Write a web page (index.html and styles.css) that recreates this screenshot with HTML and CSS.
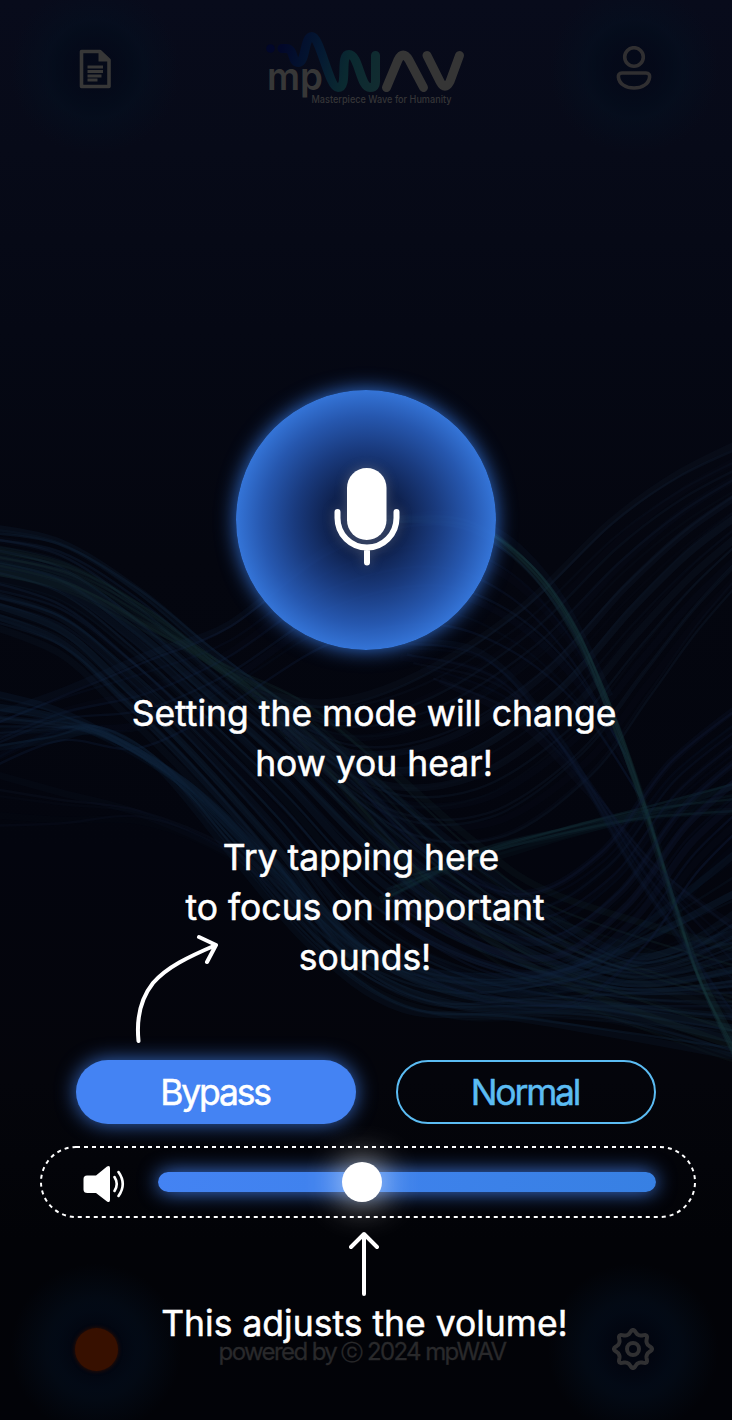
FILE: index.html
```html
<!DOCTYPE html>
<html lang="en">
<head>
<meta charset="utf-8">
<title>mpWAV</title>
<link rel="stylesheet" href="styles.css">
</head>
<body>
<div class="screen">
  <svg class="waves" id="waves" viewBox="0 0 732 1420" fill="none" aria-hidden="true"></svg>

  <header class="header">
    <div class="glow glow-doc">
      <svg class="icon-doc" width="34" height="40" viewBox="0 0 34 40" fill="none" stroke="#373737">
        <path d="M3.5 2.500H22L31 11V37.500H3.5Z" stroke-width="3.6" stroke-linejoin="round"/>
        <path d="M20.500 2V12.500H31.500L29 7.500L25 4Z" fill="#373737" stroke="none"/>
        <path d="M9.500 18H25M9.500 22.500H25M9.500 27H23.500M9.500 31H19.500" stroke-width="3.200"/>
      </svg>
    </div>
    <svg class="logo" width="204" height="78" viewBox="0 0 204 78" fill="none" stroke-linecap="round" stroke-linejoin="round">
      <defs>
        <linearGradient id="wave" gradientUnits="userSpaceOnUse" x1="18" y1="20" x2="120" y2="50">
          <stop offset="0" stop-color="#020729"/>
          <stop offset=".35" stop-color="#041832"/>
          <stop offset=".65" stop-color="#0a2930"/>
          <stop offset="1" stop-color="#122c30"/>
        </linearGradient>
      </defs>
      <circle cx="7.500" cy="20.500" r="4.300" fill="#020729"/>
      <path d="M19 20.500H23C32 20.500 28 34.500 35.500 34.500C43 34.500 41 8.500 49 8.500C57 8.500 66 59.500 75 59.500C86 59.500 76 26.500 86 26.500C96 26.500 97 59.500 107 59.500C113.500 59.500 112.500 54 112.500 48V27.500" stroke="url(#wave)" stroke-width="9"/>
      <path d="M123.500 59.500L135 32Q140 22 146 32L160.500 59.500M164 27.500L177 53.500Q182 63 187 53.500L196.500 27.500" stroke="#353535" stroke-width="9"/>
      <text x="4" y="62" class="logo-mp" textLength="56" lengthAdjust="spacingAndGlyphs">mp</text>
      <text x="48.500" y="74.500" class="logo-tag" textLength="140" lengthAdjust="spacingAndGlyphs">Masterpiece Wave for Humanity</text>
    </svg>
    <div class="glow glow-user">
      <svg width="38" height="46" viewBox="0 0 38 46" fill="none" stroke="#302f31" stroke-width="3.600" stroke-linejoin="round">
        <circle cx="19" cy="11" r="9.300"/>
        <path d="M7 27H31C34 27 34.800 29 34.600 31C34 38 27 42 19 42S4 38 3.400 31C3.200 29 4 27 7 27Z"/>
      </svg>
    </div>
  </header>

  <main class="main">
    <button class="mic" aria-label="Listen">
      <svg width="68" height="100" viewBox="0 0 68 100" fill="none" stroke="#fff" stroke-width="6" stroke-linecap="round">
        <rect x="14" y="1" width="39.500" height="72" rx="19.700" fill="#fff" stroke="none"/>
        <path d="M4.500 45V51A29.500 29.500 0 0 0 63.500 51V45M34 82V95.500"/>
      </svg>
    </button>

    <p class="hint hint-mode">Setting the mode will change<br>how you hear!</p>
    <p class="hint hint-tap"><span class="l1">Try tapping here</span><br><span class="l2">to focus on important</span><br><span class="l3">sounds!</span></p>

    <svg class="arrow-curve" width="90" height="114" viewBox="0 0 90 114" fill="none" stroke="#fff" stroke-width="4" stroke-linecap="round" stroke-linejoin="round">
      <path d="M8.500 110C6 85 12 66 23 52C37 36 58 26 86 14M69 6L86 14L77 31"/>
    </svg>

    <div class="modes">
      <button class="mode mode-on">Bypass</button>
      <button class="mode mode-off">Normal</button>
    </div>

    <div class="volume">
      <svg class="volume-frame" width="656" height="72" fill="none">
        <rect x="1" y="1" width="654" height="70" rx="35" stroke="#fff" stroke-width="2" stroke-dasharray="4 4"/>
      </svg>
      <svg class="speaker" width="44" height="40" viewBox="0 0 44 40" fill="none" stroke="#fff" stroke-width="2.600" stroke-linecap="round">
        <path d="M5 11.500H14L25 2.500Q28 1 28 4V36Q28 39 25 37.500L14 29H5.500Q1.500 29 1.500 25.500V15Q1.500 11.500 5 11.500Z" fill="#fff" stroke="none"/>
        <path d="M32.500 13Q37 20 32.500 27M36.500 8Q45 20 36.500 32"/>
      </svg>
      <div class="track"><div class="knob"></div></div>
    </div>

    <div class="hint hint-volume">
      <svg width="32" height="66" viewBox="0 0 32 66" fill="none" stroke="#fff" stroke-width="4" stroke-linecap="round" stroke-linejoin="round">
        <path d="M15 64V4M2 17L15 4L28 17"/>
      </svg>
      <span>This adjusts the volume!</span>
    </div>
  </main>

  <footer class="footer">
    <div class="glow glow-rec"><span class="rec"></span></div>
    <p class="credit">powered by <span class="c">ⓒ</span> 2024 mpWAV</p>
    <div class="glow glow-gear">
      <svg width="46" height="46" viewBox="-23 -23 46 46" fill="none" stroke="#303032" stroke-width="4" stroke-linejoin="round">
        <path id="gear"/>
        <circle r="6"/>
      </svg>
    </div>
  </footer>
</div>
<script src="waves.js"></script>
</body>
</html>
```
FILE: styles.css
```css
* { box-sizing: border-box; }

body {
  margin: 0;
  background: #020308;
  font-family: Inter, "Liberation Sans", sans-serif;
  color: #fff;
}

.screen {
  position: relative;
  width: 732px;
  height: 1420px;
  overflow: hidden;
  display: flex;
  flex-direction: column;
  background: linear-gradient(#080b1b 0, #070a18 150px, #050814 330px, #04060f 560px, #03050e 850px, #04050b 1080px, #020307 1240px, #020308 100%);
}

.waves { position: absolute; inset: 0; width: 732px; height: 1420px; filter: blur(.7px); opacity: .75; }

.header, .footer {
  position: relative;
  display: flex;
  justify-content: space-between;
  flex: none;
}
.header { height: 156px; padding-top: 28px; }

.glow {
  width: 190px;
  height: 190px;
  flex: none;
  display: flex;
  align-items: center;
  justify-content: center;
  background: radial-gradient(closest-side, rgba(2, 8, 24, .5) 20%, rgba(3, 13, 28, .65) 42%, rgba(4, 16, 32, .5) 52%, rgba(4, 14, 30, 0) 90%);
}
.header .glow { margin-top: -54px; }
.glow-doc { margin-left: 0; }
.glow-user { margin-right: 3px; }

.logo { flex: none; }
.logo-mp { font-size: 38px; font-weight: 600; fill: #373737; }
.logo-tag { font-size: 10px; font-weight: 500; fill: #353537; }

.main {
  position: relative;
  flex: none;
  height: 1098px;
  display: flex;
  flex-direction: column;
}

button { font: inherit; border: 0; padding: 0; }

.mic {
  width: 260px;
  height: 260px;
  margin: 234px 0 0 236px;
  flex: none;
  border-radius: 50%;
  display: flex;
  align-items: center;
  justify-content: center;
  background: radial-gradient(closest-side, rgba(14, 32, 78, .72) 0, rgba(18, 42, 98, .78) 30%, rgba(29, 67, 144, .86) 55%, rgba(41, 94, 188, .92) 80%, rgba(54, 120, 222, .97) 100%);
  box-shadow: 0 0 20px rgba(59, 130, 246, .85);
}
.mic svg { filter: drop-shadow(0 0 6px rgba(180, 180, 180, .35)); margin: -7px 0 0 1px; }

.hint {
  margin: 0;
  font-size: 35.5px;
  line-height: 50px;
  font-weight: 400;
  -webkit-text-stroke: .5px currentColor;
  text-align: center;
  white-space: nowrap;
}
.hint-mode { margin: 39px 0 0 16px; }
.hint-tap { margin: 44px 10px 0 0; }
.hint-tap .l2, .hint-tap .l3 { margin-left: 8px; }

.arrow-curve { position: absolute; left: 130px; top: 775px; }

.modes {
  display: flex;
  gap: 40px;
  margin: 77px 0 0 76px;
}
.mode {
  height: 64px;
  border-radius: 32px;
  font-size: 35.5px;
  font-weight: 400;
  letter-spacing: -2.2px;
  -webkit-text-stroke: .5px currentColor;
  text-align: center;
}
.mode-on { width: 280px; padding-right: 2px; background: #4483f3; color: #fff; box-shadow: 0 0 20px rgba(68, 131, 243, .8); }
.mode-off { width: 260px; padding-right: 2px; background: transparent; border: 2px solid #5bbcf3; color: #5bbcf3; }

.volume {
  position: relative;
  display: flex;
  align-items: center;
  width: 656px;
  height: 72px;
  margin: 22px 0 0 40px;
  padding: 0 40px 0 42px;
}
.volume-frame { position: absolute; left: 0; top: 0; }
.speaker { flex: none; margin-top: 4px; }
.track {
  width: 498px;
  height: 20px;
  margin-left: 32px;
  border-radius: 10px;
  background: linear-gradient(100deg, #4483f3, #3780e3);
  box-shadow: 0 0 20px rgba(68, 131, 243, .95);
}
.knob {
  width: 40px;
  height: 40px;
  margin: -10px 0 0 184px;
  border-radius: 50%;
  background: #fff;
  box-shadow: 0 0 36px rgba(255, 255, 255, .85);
}

.hint-volume {
  position: absolute;
  z-index: 2;
  left: 0;
  right: 3px;
  top: 1074px;
  display: flex;
  flex-direction: column;
  align-items: center;
}
.hint-volume span { margin-top: 3px; }

.footer { height: 166px; }
.glow-rec { margin-left: 1px; }
.glow-gear { margin-right: 4px; }
.rec { width: 43px; height: 43px; border-radius: 50%; background: #371000; box-shadow: 0 0 4px #371000; }
.credit {
  margin: 82px 5px 0 0;
  font-size: 24px;
  line-height: 32px;
  font-weight: 400;
  letter-spacing: -1.6px;
  -webkit-text-stroke: .3px currentColor;
  color: #29292b;
  white-space: nowrap;
}
.credit .c { font-size: 22px; }
```
FILE: waves.js
```js
// Each family is a sheet of strands blended between two guide curves.
const families = [
  { a: [[-20,526],[60,540],[140,588],[215,650],[300,715],[400,800],[500,880],[640,960],[760,900]],
    b: [[-20,620],[60,650],[120,705],[185,770],[270,870],[350,975],[450,1018],[600,1020],[760,1066]], n: 34, c: '#16304c', o: .3 },
  { a: [[-20,545],[70,565],[150,610],[220,665],[300,700],[380,760],[470,840],[560,900],[760,960]],
    b: [[-20,570],[70,590],[140,625],[215,665],[290,740],[370,840],[450,930],[560,1000],[760,1075]], n: 12, c: '#1f403f', o: .22 },
  { a: [[-20,720],[60,690],[150,650],[230,620],[330,545],[430,514],[500,535],[560,600],[610,700]],
    b: [[-20,775],[60,740],[140,745],[230,700],[330,640],[430,622],[510,650],[580,710],[640,800]], n: 9, c: '#1b3360', o: .2 },
  { a: [[-20,750],[50,738],[100,728],[160,765],[230,850],[310,945],[400,1010],[520,1022],[760,1065]],
    b: [[-20,690],[50,710],[110,740],[190,790],[270,860],[370,950],[480,975],[600,950],[760,830]], n: 16, c: '#15304c', o: .28 },
  { a: [[250,690],[330,700],[420,670],[520,605],[610,520],[680,472],[760,435]],
    b: [[290,740],[400,830],[500,840],[590,780],[650,700],[700,630],[760,560]], n: 24, c: '#182b42', o: .25 },
  { a: [[380,518],[470,525],[530,565],[575,630],[615,720],[645,810],[675,910],[705,990],[760,1090]],
    b: [[380,524],[465,522],[532,570],[578,635],[612,720],[648,815],[678,910],[702,985],[760,1110]], n: 6, c: '#1d4448', o: .34 },
  { a: [[380,900],[480,850],[560,830],[650,808],[760,775]],
    b: [[400,880],[490,855],[570,832],[650,816],[760,812]], n: 7, c: '#19414a', o: .3 },
  { a: [[360,780],[430,850],[520,890],[600,850],[670,760],[760,690]],
    b: [[420,980],[500,1010],[580,1010],[650,950],[700,880],[760,820]], n: 22, c: '#152448', o: .25 },
  { a: [[440,680],[520,720],[590,790],[660,870],[760,940]],
    b: [[380,640],[480,650],[560,740],[640,880],[760,1060]], n: 10, c: '#152444', o: .22 },
  { a: [[-20,770],[60,790],[140,810],[230,850],[300,900]],
    b: [[-20,825],[60,825],[140,820],[220,850],[300,920]], n: 5, c: '#131f36', o: .2 }
];

function strand(points) {
  let d = `M${points[0]}`;
  for (let i = 0; i < points.length - 1; i++) {
    const p0 = points[i - 1] || points[i], p1 = points[i], p2 = points[i + 1], p3 = points[i + 2] || p2;
    const k = (a, b, c, s) => (c + s * (b - a) / 6).toFixed(1);
    d += `C${k(p0[0], p2[0], p1[0], 1)} ${k(p0[1], p2[1], p1[1], 1)} ${k(p1[0], p3[0], p2[0], -1)} ${k(p1[1], p3[1], p2[1], -1)} ${p2[0]} ${p2[1]}`;
  }
  return d;
}

let out = '';
for (const f of families) {
  for (let i = 0; i < f.n; i++) {
    const t = i / (f.n - 1);
    const pts = f.a.map((p, j) => [0, 1].map(k => +(p[k] + (f.b[j][k] - p[k]) * t + 4 * Math.sin(i * 2.3 + j * .6) * k).toFixed(1)));
    const o = (f.o * (.75 + .5 * Math.sin(i * 1.7))).toFixed(2);
    out += `<path d="${strand(pts)}" stroke="${f.c}" stroke-width="${i % 3 ? 2.4 : 7}" opacity="${o}"/>`;
  }
}
document.getElementById('waves').innerHTML = out;

// Eight-lobed gear outline.
let g = '';
for (let i = 0; i < 96; i++) {
  const a = i / 96 * Math.PI * 2, r = 16.700 + 2 * Math.cos(8 * a) + .4 * Math.cos(16 * a);
  g += `${i ? 'L' : 'M'}${(r * Math.sin(a)).toFixed(2)} ${(-r * Math.cos(a)).toFixed(2)}`;
}
document.getElementById('gear').setAttribute('d', g + 'Z');
```
